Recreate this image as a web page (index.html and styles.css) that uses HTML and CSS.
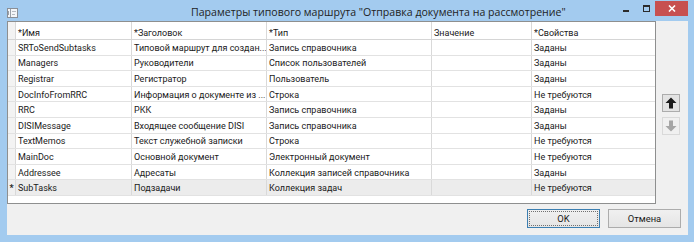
FILE: index.html
```html
<!DOCTYPE html>
<html>
<head>
    <title>Параметры типового маршрута</title>
    <link rel="stylesheet" href="styles.css">
</head>
<body>
    <div class="window">
        <div class="titlebar">
            <svg class="app-icon" width="11" height="10" viewBox="0 0 11 10">
                <rect x="0.5" y="0.5" width="10" height="9" fill="#f4f6f8" stroke="#8a8f96"/>
                <line x1="3.5" y1="1" x2="3.5" y2="9" stroke="#9aa0a8"/>
                <line x1="1.5" y1="3" x2="1.5" y2="7" stroke="#9aa0a8"/>
                <line x1="5" y1="3.5" x2="9" y2="3.5" stroke="#b5bac0"/>
                <line x1="5" y1="6.5" x2="8" y2="6.5" stroke="#b5bac0"/>
            </svg>
            <div class="title">Параметры типового маршрута "Отправка документа на рассмотрение"</div>
            <div class="controls">
                <span class="ctl-min"></span>
                <span class="ctl-max"></span>
                <span class="ctl-close">
                    <svg width="8" height="7" viewBox="0 0 8 7">
                        <path d="M1 0.5 L7 6.5 M7 0.5 L1 6.5" stroke="#fff" stroke-width="1.6"/>
                    </svg>
                </span>
            </div>
        </div>

        <div class="client">
            <div class="main">
                <div class="grid">
                    <div class="row head">
                        <div class="cell ind"></div>
                        <div class="cell">*Имя</div>
                        <div class="cell">*Заголовок</div>
                        <div class="cell">*Тип</div>
                        <div class="cell">Значение</div>
                        <div class="cell last">*Свойства</div>
                    </div>
                    <div class="row">
                        <div class="cell ind"></div>
                        <div class="cell">SRToSendSubtasks</div>
                        <div class="cell">Типовой маршрут для создан...</div>
                        <div class="cell">Запись справочника</div>
                        <div class="cell"></div>
                        <div class="cell last">Заданы</div>
                    </div>
                    <div class="row">
                        <div class="cell ind"></div>
                        <div class="cell">Managers</div>
                        <div class="cell">Руководители</div>
                        <div class="cell">Список пользователей</div>
                        <div class="cell"></div>
                        <div class="cell last">Заданы</div>
                    </div>
                    <div class="row">
                        <div class="cell ind"></div>
                        <div class="cell">Registrar</div>
                        <div class="cell">Регистратор</div>
                        <div class="cell">Пользователь</div>
                        <div class="cell"></div>
                        <div class="cell last">Заданы</div>
                    </div>
                    <div class="row">
                        <div class="cell ind"></div>
                        <div class="cell">DocInfoFromRRC</div>
                        <div class="cell">Информация о документе из ...</div>
                        <div class="cell">Строка</div>
                        <div class="cell"></div>
                        <div class="cell last">Не требуются</div>
                    </div>
                    <div class="row">
                        <div class="cell ind"></div>
                        <div class="cell">RRC</div>
                        <div class="cell">РКК</div>
                        <div class="cell">Запись справочника</div>
                        <div class="cell"></div>
                        <div class="cell last">Заданы</div>
                    </div>
                    <div class="row">
                        <div class="cell ind"></div>
                        <div class="cell">DISIMessage</div>
                        <div class="cell">Входящее сообщение DISI</div>
                        <div class="cell">Запись справочника</div>
                        <div class="cell"></div>
                        <div class="cell last">Заданы</div>
                    </div>
                    <div class="row">
                        <div class="cell ind"></div>
                        <div class="cell">TextMemos</div>
                        <div class="cell">Текст служебной записки</div>
                        <div class="cell">Строка</div>
                        <div class="cell"></div>
                        <div class="cell last">Не требуются</div>
                    </div>
                    <div class="row">
                        <div class="cell ind"></div>
                        <div class="cell">MainDoc</div>
                        <div class="cell">Основной документ</div>
                        <div class="cell">Электронный документ</div>
                        <div class="cell"></div>
                        <div class="cell last">Не требуются</div>
                    </div>
                    <div class="row">
                        <div class="cell ind"></div>
                        <div class="cell">Addressee</div>
                        <div class="cell">Адресаты</div>
                        <div class="cell">Коллекция записей справочника</div>
                        <div class="cell"></div>
                        <div class="cell last">Заданы</div>
                    </div>
                    <div class="row current">
                        <div class="cell ind">*</div>
                        <div class="cell">SubTasks</div>
                        <div class="cell">Подзадачи</div>
                        <div class="cell">Коллекция задач</div>
                        <div class="cell"></div>
                        <div class="cell last">Не требуются</div>
                    </div>
                </div>

                <div class="side">
                    <button class="move">
                        <svg width="12" height="12" viewBox="0 0 12 12">
                            <path d="M6 0.5 L11.5 6 H8 V11.5 H4 V6 H0.5 Z" fill="#1b1b1b"/>
                        </svg>
                    </button>
                    <button class="move" disabled>
                        <svg width="12" height="12" viewBox="0 0 12 12">
                            <path d="M6 11.5 L11.5 6 H8 V0.5 H4 V6 H0.5 Z" fill="#a6a6a6"/>
                        </svg>
                    </button>
                </div>
            </div>

            <div class="footer">
                <button class="btn default"><span>OK</span></button>
                <button class="btn">Отмена</button>
            </div>
        </div>
    </div>
</body>
</html>
```

FILE: styles.css
```css
body {
    margin: 0;
    font-family: Roboto, "Open Sans", sans-serif;
    background-color: #a3cbef;
}

.window {
    width: 694px;
    height: 242px;
    background-color: #a3cbef;
    display: flex;
    flex-direction: column;
}

.titlebar {
    height: 21px;
    display: flex;
    align-items: flex-start;
}

.app-icon {
    margin: 8px 0 0 7px;
}

.title {
    flex: 1;
    margin: 3px 0 0 173px;
    font-family: "Open Sans", sans-serif;
    font-size: 10.6px;
    line-height: 18px;
    color: #1e1e1e;
    white-space: nowrap;
}

.controls {
    display: flex;
    align-items: flex-start;
    margin-right: 6px;
}

.ctl-min {
    width: 6px;
    height: 2px;
    margin: 10px 0 0 0;
    background-color: #2b2b2b;
}

.ctl-max {
    width: 5px;
    height: 4px;
    margin: 5px 0 0 14px;
    border: 1px solid #2b2b2b;
    border-top-width: 2px;
}

.ctl-close {
    width: 33px;
    height: 15px;
    margin: 1px 0 0 5px;
    background-color: #c75050;
    display: flex;
    align-items: center;
    justify-content: center;
}

.client {
    flex: 1;
    margin: 0 6px 7px 7px;
    background-color: #f0f0f0;
    display: flex;
    flex-direction: column;
}

.main {
    display: flex;
}

.grid {
    width: 649px;
    height: 183px;
    box-sizing: border-box;
    border: 1px solid #8e8f8f;
    background-color: #fff;
    font-size: 9px;
    color: #1a1a1a;
}

.row {
    display: grid;
    grid-template-columns: 8px 116px 135px 165px 100px 1fr;
    height: 15.6px;
    box-sizing: border-box;
    border-bottom: 1px solid #e2e2e2;
}

.row.head {
    height: 18px;
    border-bottom-color: #d5d5d5;
}

.cell {
    padding: 1px 0 0 2px;
    border-right: 1px solid #d9d9d9;
    white-space: nowrap;
    overflow: hidden;
    display: flex;
    align-items: center;
}

.row.head .cell {
    padding-top: 4px;
}

.cell.last {
    border-right: none;
}

.cell.ind {
    padding: 0;
    background-color: #f3f3f3;
    justify-content: center;
    font-size: 9px;
    font-weight: bold;
}

.row.current .cell {
    background-color: #ececec;
}

.row.current .cell.ind {
    background-color: #f0f0f0;
}

.side {
    flex: 1;
    display: flex;
    flex-direction: column;
    align-items: flex-start;
    padding: 73px 0 0 6px;
    gap: 5px;
}

.move {
    width: 18px;
    height: 18px;
    padding: 0;
    border: 1px solid #acacac;
    background-color: #e3e3e3;
    display: flex;
    align-items: center;
    justify-content: center;
}

.move:disabled {
    border-color: #d9d9d9;
    background-color: #f0f0f0;
}

.footer {
    display: flex;
    justify-content: flex-end;
    gap: 8px;
    padding: 5px 7px 0 0;
}

.btn {
    width: 73px;
    height: 19px;
    padding: 0;
    border: 1px solid #acacac;
    background: linear-gradient(#f0f0f0, #e5e5e5);
    font-family: Roboto, "Open Sans", sans-serif;
    font-size: 9.4px;
    color: #1a1a1a;
}

.btn.default {
    border-color: #3c7fb1;
    padding: 1px;
}

.btn.default span {
    display: flex;
    align-items: center;
    justify-content: center;
    height: 100%;
    border: 1px dotted #707070;
    box-sizing: border-box;
}
```
